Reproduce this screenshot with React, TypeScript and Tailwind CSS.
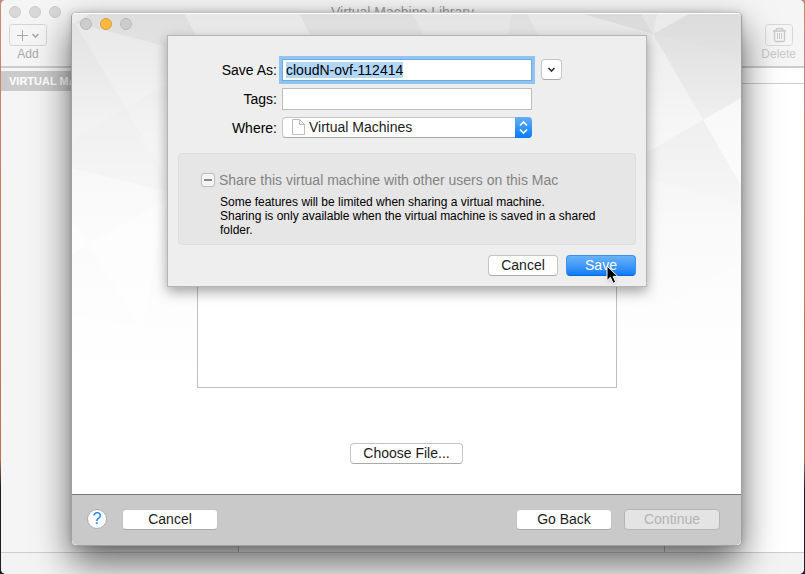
import { useEffect, useId, useRef } from "react";
import type { ReactNode } from "react";

const buttonBase =
  "h-[21px] rounded border border-[#c4c4c4] border-b-[#a9a9a9] bg-white text-sm leading-[19px] text-[#1c1c1c]";

function TrafficLights({ amber = false }: { amber?: boolean }) {
  return (
    <div className="flex gap-2">
      <button aria-label="Close" className="size-3 rounded-full border border-[#b9b9b9] bg-[#cdcdcd]" />
      <button
        aria-label="Minimize"
        className={
          amber
            ? "size-3 rounded-full border border-[#e09b35] bg-[#fdb843]"
            : "size-3 rounded-full border border-[#b9b9b9] bg-[#cdcdcd]"
        }
      />
      <button aria-label="Zoom" className="size-3 rounded-full border border-[#b9b9b9] bg-[#cdcdcd]" />
    </div>
  );
}

function ToolButton({ label, tone, children }: { label: string; tone: string; children: ReactNode }) {
  return (
    <button className={`flex flex-col items-center gap-px text-xs leading-[15px] ${tone}`}>
      {children}
      <span>{label}</span>
    </button>
  );
}

function LibraryWindow() {
  return (
    <section className="mx-px flex min-h-screen flex-col overflow-hidden rounded-[5px] bg-white">
      <header className="h-[68px] border-b-2 border-[#cdcdcd] bg-[#f5f5f5]">
        <div className="flex h-[24px] items-center px-2">
          <div className="w-[60px] opacity-70">
            <TrafficLights />
          </div>
          <h1 className="flex-1 pr-[60px] text-center text-sm leading-[22px] text-[#9c9c9c]">
            Virtual Machine Library
          </h1>
        </div>
        <div className="flex justify-between px-2">
          <ToolButton label="Add" tone="text-[#a8a8a8]">
            <svg className="h-[22px] w-[38px]" viewBox="0 0 38 22" fill="none" stroke="currentColor">
              <rect x=".5" y=".5" width="37" height="21" rx="3" stroke="#d5d5d5" />
              <path d="M13.5 6v11M8 11.5h11" />
              <path d="M23.5 10l3 3 3-3" strokeWidth="1.6" />
            </svg>
          </ToolButton>
          <ToolButton label="Delete" tone="text-[#c9c9c9]">
            <svg className="h-[22px] w-[28px]" viewBox="0 0 28 22" fill="none" stroke="currentColor">
              <rect x=".5" y=".5" width="27" height="21" rx="3" stroke="#d8d8d8" />
              <path d="M8 7h13M11 6.500q0-2 2-2h3q2 0 2 2M9.500 7v9q0 1.500 1.500 1.500h7q1.500 0 1.500-1.500V7" strokeWidth="1.300" />
              <path d="M12.500 9v6M14.500 9v6M16.500 9v6" />
            </svg>
          </ToolButton>
        </div>
      </header>
      <div className="flex flex-1">
        <nav className="w-[238px] border-r border-[#c4c4c4] bg-[#f5f5f5] pt-[3px]">
          <h2 className="h-5 bg-[#cbcbcb] pl-2 text-[11px] leading-5 font-bold text-white">VIRTUAL MACHINES</h2>
        </nav>
        <div className="flex-1 border-r border-[#c4c4c4]" />
        <aside className="w-[139px]">
          <div className="h-4 border-b border-[#cdcdcd]" />
        </aside>
      </div>
      <footer className="h-[22px] border-t border-[#cdcdcd] bg-[#f3f3f3]" />
    </section>
  );
}

function FacetBackdrop() {
  return (
    <svg
      aria-hidden="true"
      className="absolute inset-x-0 top-0 h-[360px] w-full"
      viewBox="0 0 670 360"
      preserveAspectRatio="none"
    >
      <defs>
        <linearGradient id="facetFade" x1="0" y1="0" x2="0" y2="1">
          <stop offset="0" stopColor="#fff" stopOpacity="0" />
          <stop offset=".1" stopColor="#fff" stopOpacity=".15" />
          <stop offset=".3" stopColor="#fff" stopOpacity=".55" />
          <stop offset=".6" stopColor="#fff" stopOpacity=".82" />
          <stop offset="1" stopColor="#fff" />
        </linearGradient>
      </defs>
      <rect width="670" height="360" fill="#e6e6e6" />
      <path d="M0 0H113L130 35 96 33 3 9 0 10z" fill="#dedede" />
      <path d="M0 10L3 9 18 0H0z" fill="#ebebeb" />
      <path d="M3 9L96 33V70L54 94z" fill="#e8e8e8" />
      <path d="M96 70L54 94 96 168z" fill="#e4e4e4" />
      <path d="M54 94L0 125V10H3z" fill="#e2e2e2" />
      <path d="M0 125L54 94 96 168V178L0 154z" fill="#dedede" />
      <path d="M0 154L96 178V196L16 230 0 205z" fill="#eaeaea" />
      <path d="M0 205L16 230 0 240z" fill="#f2f2f2" />
      <path d="M16 230L96 185 70 315z" fill="#f2f2f2" />
      <path d="M0 240L16 230 66 312 0 300z" fill="#e6e6e6" />
      <path d="M96 185H130V320H70z" fill="#e6e6e6" />
      <path d="M0 300L66 312 0 345z" fill="#eee" />
      <path d="M113 0H228L240 24H126z" fill="#e8e8e8" />
      <path d="M228 0H341L354 24H240z" fill="#dedede" />
      <path d="M341 0H440L436 24H354z" fill="#e5e5e5" />
      <path d="M440 0H456L468 24H436z" fill="#dfdfdf" />
      <path d="M512 0H570L582 20z" fill="#dadada" />
      <path d="M570 0H586L582 20z" fill="#e2e2e2" />
      <path d="M586 0H618L582 20z" fill="#eaeaea" />
      <path d="M618 0H670V44L582 20z" fill="#dcdcdc" />
      <path d="M582 20L670 44V84L632 106z" fill="#dedede" />
      <path d="M582 20L632 106 575 139V40z" fill="#ebebeb" />
      <path d="M632 106L670 84V172z" fill="#f2f2f2" />
      <path d="M632 106L670 172V190L575 165V139z" fill="#dcdcdc" />
      <path d="M575 165L670 190V250L575 300z" fill="#e2e2e2" />
      <rect width="670" height="360" fill="url(#facetFade)" />
    </svg>
  );
}

function Field({ label, id, children }: { label: string; id: string; children: ReactNode }) {
  return (
    <div className="flex h-[29px] items-center">
      <label htmlFor={id} className="w-[104px] pr-[5px] text-right text-sm leading-4">
        {label}
      </label>
      {children}
    </div>
  );
}

function Pointer() {
  return (
    <svg
      aria-hidden="true"
      className="pointer-events-none absolute top-[10px] left-10 h-[20px] w-[14px] drop-shadow"
      viewBox="0 0 14 20"
    >
      <path d="M1 1v14.500l3.400-3.200 2.700 6 2.600-1.200-2.600-5.700h4.700z" fill="#000" stroke="#fff" />
    </svg>
  );
}

function SaveSheet() {
  const id = useId();
  const nameRef = useRef<HTMLInputElement>(null);
  useEffect(() => nameRef.current?.select(), []);
  return (
    <form
      onSubmit={(event) => event.preventDefault()}
      className="absolute top-[22px] right-[94px] left-[95px] border border-[#b5b5b5] bg-[#eee] px-[10px] pt-[19px] pb-[10px] shadow-[0_5px_12px_rgba(0,0,0,0.35)]"
    >
      <Field label="Save As:" id={`${id}-name`}>
        <input
          ref={nameRef}
          id={`${id}-name`}
          defaultValue="cloudN-ovf-112414"
          className="h-[22px] w-[250px] border border-[#74a9dc] bg-white px-[3px] text-sm outline-3 outline-[#8fc3f3] selection:bg-[#b2d7fd] selection:text-black"
        />
        <button aria-label="Show more options" className={`${buttonBase} ml-[9px] grid w-[21px] place-items-center`}>
          <svg className="size-[9px]" viewBox="0 0 9 9" fill="none" stroke="#333" strokeWidth="1.600">
            <path d="M1.500 3l3 3 3-3" />
          </svg>
        </button>
      </Field>
      <Field label="Tags:" id={`${id}-tags`}>
        <input id={`${id}-tags`} className="h-[22px] w-[250px] border border-[#bdbdbd] bg-white px-1 text-sm" />
      </Field>
      <Field label="Where:" id={`${id}-where`}>
        <div className="relative flex">
          <select id={`${id}-where`} className={`${buttonBase} w-[250px] appearance-none pl-[26px]`}>
            <option>Virtual Machines</option>
          </select>
          <svg
            className="pointer-events-none absolute top-[2px] left-[10px] h-4 w-[13px]"
            viewBox="0 0 13 16"
            fill="#fff"
            stroke="#bdbdbd"
          >
            <path d="M.5.500h7l5 5v10H.500zM7.500.500v5h5" />
          </svg>
          <svg className="pointer-events-none absolute top-0 right-0 h-[21px] w-[17px]" viewBox="0 0 17 21">
            <defs>
              <linearGradient id="stepper" x1="0" y1="0" x2="0" y2="1">
                <stop offset="0" stopColor="#62b0f8" />
                <stop offset="1" stopColor="#0a7bf5" />
              </linearGradient>
            </defs>
            <path d="M0 0h13q4 0 4 4v13q0 4-4 4H0z" fill="url(#stepper)" />
            <path d="M5 8.500l3.500-3.500 3.500 3.500M5 12.500l3.500 3.500 3.500-3.500" fill="none" stroke="#fff" strokeWidth="1.600" />
          </svg>
        </div>
      </Field>
      <fieldset className="mt-[11px] h-[92px] rounded border border-[#dedede] bg-[#e6e6e6] pt-[18px] pl-[22px]">
        <div className="flex items-center gap-1">
          <input
            type="checkbox"
            id={`${id}-share`}
            disabled
            className="h-[14px] w-[14px] appearance-none rounded-[3px] border border-[#bcbcbc] bg-[#f3f3f3] bg-[linear-gradient(#8a8a8a,#8a8a8a)] bg-[length:8px_2px] bg-center bg-no-repeat"
          />
          <label htmlFor={`${id}-share`} className="text-sm leading-4 text-[#838383]">
            Share this virtual machine with other users on this Mac
          </label>
        </div>
        <p className="mt-[7px] ml-[19px] max-w-[390px] text-xs leading-[14px] text-black">
          Some features will be limited when sharing a virtual machine.
          <br />
          Sharing is only available when the virtual machine is saved in a shared folder.
        </p>
      </fieldset>
      <div className="mt-[10px] flex justify-end gap-2">
        <button type="button" className={`${buttonBase} w-[70px]`}>
          Cancel
        </button>
        <div className="relative flex">
          <button className="h-[21px] w-[70px] rounded border border-[#3a92ee] border-b-[#0a66dd] bg-linear-to-b from-[#68b3f8] to-[#087cf6] text-sm leading-[19px] text-white">
            Save
          </button>
          <Pointer />
        </div>
      </div>
    </form>
  );
}

function ImportDialog() {
  return (
    <section
      role="dialog"
      aria-label="Import virtual machine"
      className="absolute top-[12px] right-[63px] bottom-[28px] left-[71px] flex flex-col rounded-[5px] border border-[#a0a0a0] border-t-[#c2c2c2] bg-white shadow-[0_16px_36px_rgba(0,0,0,0.6),0_0_6px_rgba(0,0,0,0.15)]"
    >
      <div className="relative flex flex-1 flex-col overflow-hidden rounded-t-[4px] border-t border-white">
        <FacetBackdrop />
        <div className="relative px-2 pt-1">
          <TrafficLights amber />
        </div>
        <div className="relative mr-[124px] ml-[125px] mt-[100px] flex-1 border border-[#bfbfbf] bg-white" />
        <div className="relative flex justify-center pt-[55px] pb-[30px]">
          <button className={`${buttonBase} w-[113px]`}>Choose File...</button>
        </div>
      </div>
      <footer className="flex h-[51px] items-center rounded-b-[5px] border-t border-[#777] bg-[#c9c9c9] px-[15px] pb-[2px]">
        <button
          aria-label="Help"
          className="size-5 rounded-full border border-[#adadad] bg-white text-base leading-[18px] text-[#1285f7]"
        >
          ?
        </button>
        <button className={`${buttonBase} ml-[15px] w-[96px]`}>Cancel</button>
        <div className="ml-auto flex gap-3 pr-[6px]">
          <button className={`${buttonBase} w-[96px]`}>Go Back</button>
          <button
            disabled
            className="h-[21px] w-[96px] rounded border border-[#b5b5b5] bg-[#e4e4e4] text-sm leading-[19px] text-[#b3b3b3]"
          >
            Continue
          </button>
        </div>
      </footer>
      <SaveSheet />
    </section>
  );
}

export default function App() {
  return (
    <main className="relative min-h-screen overflow-hidden bg-linear-to-b from-[#c98a74] via-[#b8744f] via-80% to-[#1c1d2b] to-85% font-['Liberation_Sans',Arial,sans-serif]">
      <LibraryWindow />
      <ImportDialog />
    </main>
  );
}
